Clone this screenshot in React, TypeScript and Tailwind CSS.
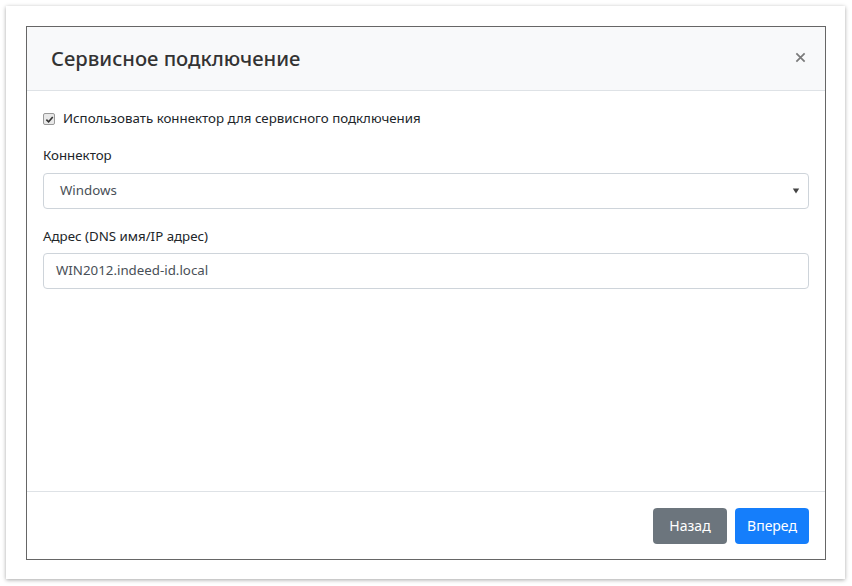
export default function App() {
  return (
    <div className="w-[852px] h-[586px] bg-white p-[6px] font-['Noto_Sans',sans-serif] text-[#212529]">
      <div className="w-[839px] h-[573px] bg-white shadow-[0_1px_4px_rgba(0,0,0,0.35)] p-[20px]">
        <div className="w-[800px] h-[534px] border border-[#666] flex flex-col bg-white">
          {/* header */}
          <div className="h-[64px] bg-[#f8f9fa] border-b border-[#dee2e6] flex items-center justify-between pl-[24px] pr-[19px]">
            <h1 className="text-[20.2px] font-medium text-[#333]">Сервисное подключение</h1>
            <svg viewBox="0 0 12 12" className="w-[11px] h-[11px] mt-[-2px]">
              <path d="M1.5 1.5 L10.5 10.5 M10.5 1.5 L1.5 10.5" stroke="#7a7a7a" strokeWidth="1.9" />
            </svg>
          </div>

          {/* body */}
          <div className="flex-1 px-[16px] pt-[17px]">
            <label className="flex items-center h-[22px] text-[13.3px]">
              <span className="w-[12px] h-[12px] rounded-[2px] border border-[#999] bg-[#e8e8e8] flex items-center justify-center mr-[8px]">
                <svg viewBox="0 0 10 10" className="w-[9px] h-[9px]">
                  <path d="M1.5 5.2 L4 7.6 L8.6 2.2" fill="none" stroke="#333" strokeWidth="1.8" />
                </svg>
              </span>
              Использовать коннектор для сервисного подключения
            </label>

            <div className="mt-[15px] text-[13.3px] leading-[20px]">Коннектор</div>
            <div className="mt-[8px] h-[36px] border border-[#ced4da] rounded-[4px] flex items-center justify-between pl-[16px] pr-[8px] text-[13.3px] text-[#495057]">
              <span>Windows</span>
              <svg viewBox="0 0 10 10" className="w-[8px] h-[8px]">
                <path d="M1 2 L9 2 L5 8 Z" fill="#444" />
              </svg>
            </div>

            <div className="mt-[17px] text-[13.3px] leading-[20px]">Адрес (DNS имя/IP адрес)</div>
            <div className="mt-[7px] h-[36px] border border-[#ced4da] rounded-[4px] flex items-center pl-[12px] text-[13.3px] text-[#495057]">
              WIN2012.indeed-id.local
            </div>
          </div>

          {/* footer */}
          <div className="h-[68px] border-t border-[#dee2e6] flex items-center justify-end gap-[8px] px-[16px]">
            <button className="w-[74px] h-[36px] rounded-[4px] bg-[#6c757d] text-white text-[14px]">Назад</button>
            <button className="w-[74px] h-[36px] rounded-[4px] bg-[#157efb] text-white text-[14px]">Вперед</button>
          </div>
        </div>
      </div>
    </div>
  );
}
